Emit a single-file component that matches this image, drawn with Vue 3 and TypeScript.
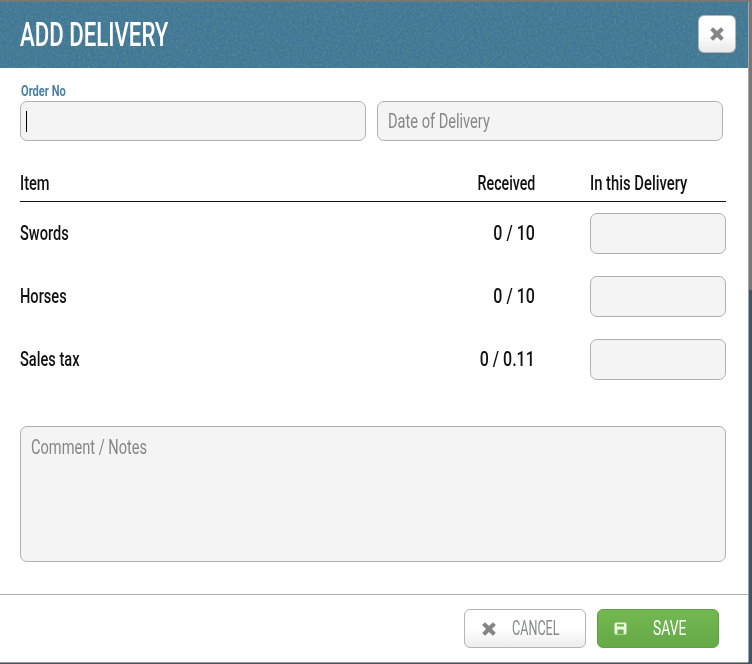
<script setup lang="ts">
interface Row { name: string; received: string }
const rows: Row[] = [
  { name: 'Swords', received: '0 / 10' },
  { name: 'Horses', received: '0 / 10' },
  { name: 'Sales tax', received: '0 / 0.11' },
]
</script>

<template>
  <div class="page">
    <div class="modal">
      <header class="head">
        <svg class="noise" width="100%" height="100%" aria-hidden="true">
          <filter id="grain">
            <feTurbulence type="fractalNoise" baseFrequency="0.42" numOctaves="3" seed="4" />
            <feColorMatrix type="matrix" values="0 0 0 0 0.1  0 0 0 0 0.24  0 0 0 0 0.3  1.7 0 0 0 -0.55" />
          </filter>
          <rect width="100%" height="100%" filter="url(#grain)" />
        </svg>
        <h1 class="title"><span class="nar">ADD DELIVERY</span></h1>
        <button class="close" type="button" aria-label="Close">
          <svg width="16" height="16" viewBox="0 0 14 14"><path d="M3.6 1 7 4.4 10.4 1 13 3.6 9.6 7 13 10.4 10.4 13 7 9.6 3.6 13 1 10.4 4.4 7 1 3.6Z" fill="#858585" /></svg>
        </button>
      </header>

      <div class="body">
        <div class="label"><span class="nar">Order No</span></div>
        <div class="top-fields">
          <div class="field"><i class="caret"></i></div>
          <div class="field"><span class="nar ph">Date of Delivery</span></div>
        </div>

        <div class="row hdr">
          <div class="c-item"><span class="nar">Item</span></div>
          <div class="c-rec"><span class="nar right">Received</span></div>
          <div class="c-in"><span class="nar">In this Delivery</span></div>
        </div>
        <div v-for="r in rows" :key="r.name" class="row item">
          <div class="c-item"><span class="nar">{{ r.name }}</span></div>
          <div class="c-rec"><span class="nar right">{{ r.received }}</span></div>
          <div class="c-in"><div class="field small"></div></div>
        </div>

        <div class="field notes"><span class="nar ph">Comment / Notes</span></div>
      </div>

      <footer class="foot">
        <button class="btn cancel" type="button">
          <svg width="16" height="16" viewBox="0 0 14 14"><path d="M3.6 1 7 4.4 10.4 1 13 3.6 9.6 7 13 10.4 10.4 13 7 9.6 3.6 13 1 10.4 4.4 7 1 3.6Z" fill="#858585" /></svg>
          <span class="btxt"><span class="nar">CANCEL</span></span>
        </button>
        <button class="btn save" type="button">
          <svg width="13" height="13" viewBox="0 0 13 13"><path fill-rule="evenodd" d="M2 0.5H11A1.5 1.5 0 0 1 12.5 2V11A1.5 1.5 0 0 1 11 12.5H2A1.5 1.5 0 0 1 0.5 11V2A1.5 1.5 0 0 1 2 0.5ZM3 2.2V4.6H10V2.2ZM3.4 7.4V12H9.6V7.4Z" fill="#eaf5e2" /></svg>
          <span class="btxt"><span class="nar">SAVE</span></span>
        </button>
      </footer>
    </div>
  </div>
</template>

<style scoped>
.page {
  width: 752px;
  height: 664px;
  background: linear-gradient(#777 0, #777 290px, #3e5462 290px, #3e5462 100%);
  padding: 2px 4px 2px 0;
  box-sizing: border-box;
  font-family: Roboto, "Liberation Sans", sans-serif;
  overflow: hidden;
}
.modal {
  width: 748px;
  height: 660px;
  background: #fff;
  display: flex;
  flex-direction: column;
  box-shadow: 1px 0 0 #a5a5a5, 0 1px 0 #999;
}
.nar {
  display: inline-block;
  white-space: nowrap;
  transform: scaleX(0.73);
  transform-origin: left center;
}
.nar.right {
  transform-origin: right center;
}
.head {
  position: relative;
  height: 66px;
  flex: none;
  background: #3d7697;
  display: flex;
  align-items: center;
  justify-content: space-between;
  padding: 0 12px 0 20px;
  box-sizing: border-box;
}
.noise {
  position: absolute;
  inset: 0;
}
.title {
  position: relative;
  margin: 0 0 3px;
  color: #fff;
  font-size: 34px;
  font-weight: 500;
  line-height: 40px;
}
.title .nar {
  transform: scaleX(0.653);
}
.close {
  position: relative;
  width: 38px;
  height: 38px;
  margin-top: -2px;
  border: 1px solid #b5b5b5;
  border-radius: 6px;
  background: linear-gradient(#ffffff 50%, #e9e9e9);
  display: flex;
  align-items: center;
  justify-content: center;
  padding: 0;
}
.body {
  flex: 1;
  padding: 15px 22px 0 20px;
  min-height: 0;
  font-size: 20px;
  font-weight: 500;
  color: #111;
}
.label {
  height: 18px;
  line-height: 16px;
  font-size: 15px;
  font-weight: 700;
  color: #4a7fa3;
  padding-left: 1px;
}
.label .nar {
  transform: scaleX(0.74);
}
.top-fields {
  display: grid;
  grid-template-columns: 346px 346px;
  column-gap: 11px;
}
.field {
  height: 40px;
  box-sizing: border-box;
  border: 1px solid #b0b0b0;
  border-radius: 7px;
  background: #f4f4f4;
  display: flex;
  align-items: center;
  padding-left: 10px;
}
.caret {
  width: 1px;
  height: 21px;
  background: #000;
  margin-left: -5px;
}
.ph {
  color: #878787;
  font-weight: 400;
}
.row {
  display: grid;
  align-items: center;
}
.c-rec {
  display: flex;
  justify-content: flex-end;
  white-space: nowrap;
  padding-right: 1px;
}
.hdr {
  margin-top: 20px;
  height: 41px;
  padding-top: 3px;
  border-bottom: 1px solid #111;
  box-sizing: border-box;
  width: 706px;
  grid-template-columns: 400px 116px 190px;
}
.hdr .c-rec .nar {
  transform: scaleX(0.71);
}
.hdr .c-in {
  padding-left: 54px;
}
.hdr .c-in .nar {
  transform: scaleX(0.74);
}
.item {
  width: 706px;
  grid-template-columns: 400px 116px 54px 136px;
  height: 63px;
}
.item .c-item,
.item .c-rec {
  margin-top: -2px;
}
.item .c-rec .nar {
  transform: scaleX(0.8);
}
.item .c-in {
  grid-column: 4;
}
.small {
  height: 41px;
}
.notes {
  width: 706px;
  height: 136px;
  margin-top: 35px;
  align-items: flex-start;
  padding-top: 8px;
}
.foot {
  flex: none;
  height: 68px;
  border-top: 1px solid #b0b0b0;
  display: flex;
  justify-content: flex-end;
  gap: 11px;
  padding: 14px 29px 0 0;
  box-sizing: border-box;
}
.btn {
  width: 122px;
  height: 39px;
  border-radius: 6px;
  display: flex;
  align-items: center;
  padding: 0 0 0 16px;
  font-family: inherit;
  font-size: 21px;
  box-sizing: border-box;
}
.btn svg {
  flex: none;
}
.btxt {
  display: block;
  text-align: left;
  line-height: 24px;
  margin-top: -1px;
}
.cancel {
  border: 1px solid #b5b5b5;
  background: linear-gradient(#ffffff 50%, #ececec);
  color: #848a90;
}
.cancel .nar {
  transform: scaleX(0.6);
}
.cancel .btxt {
  margin-left: 15px;
}
.save {
  border: 1px solid #5f9e45;
  background: linear-gradient(#72b850, #66a948);
  color: #fff;
}
.save .nar {
  transform: scaleX(0.66);
}
.save .btxt {
  margin-left: 26px;
}
</style>
